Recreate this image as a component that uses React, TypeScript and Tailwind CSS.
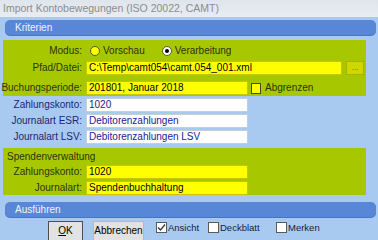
const FONT = "font-['Liberation_Sans',Arial,sans-serif]";

function Label({ text, tone }: { text: string; tone: "green" | "blue" }) {
  return (
    <div
      className={`w-[83px] shrink-0 pr-[4px] text-right whitespace-nowrap ${
        tone === "green" ? "text-[#2e3300]" : "text-[#22227a]"
      }`}
    >
      {text}
    </div>
  );
}

function Field({
  value,
  width,
  kind,
}: {
  value: string;
  width: string;
  kind: "yellow" | "white";
}) {
  return (
    <div
      className={`${width} h-[14px] flex items-center px-[2px] leading-none whitespace-nowrap overflow-hidden border ${
        kind === "yellow"
          ? "bg-[#ffff00] border-[#c9c300] text-black"
          : "bg-white border-[#c8cdd4] text-[#20209a]"
      }`}
    >
      {value}
    </div>
  );
}

function SectionBar({ title }: { title: string }) {
  return (
    <div className="ml-[5px] mr-[2px] h-[15px] rounded-[5px] bg-[#5787d6] flex items-center pl-[10px] text-[#eef3ff] shadow-[0_1px_0_#4a76c0]">
      {title}
    </div>
  );
}

function Check({ checked, label, width }: { checked?: boolean; label: string; width: string }) {
  return (
    <div className={`${width} flex items-center gap-[1px] text-[9.5px] text-[#1b1b3a]`}>
      <div className="w-[11px] h-[11px] bg-white border border-[#5a5a5a] flex items-center justify-center">
        {checked && (
          <svg width="9" height="9" viewBox="0 0 9 9">
            <path d="M1 4.5 L3.5 7 L8 1.5" fill="none" stroke="#333" strokeWidth="1.2" />
          </svg>
        )}
      </div>
      <span>{label}</span>
    </div>
  );
}

export default function App() {
  return (
    <div className={`${FONT} w-[378px] h-[240px] overflow-hidden bg-[#a8caf0] text-[10px] leading-none`}>
      <div className="h-[17px] bg-gradient-to-b from-[#dfe5ec] to-[#e9edf2] flex items-center pl-[3px] text-[10.5px] text-[#8a8c90]">
        Import Kontobewegungen (ISO 20022, CAMT)
      </div>

      <div className="mt-[3px]">
        <SectionBar title="Kriterien" />
      </div>

      <div className="mt-[5px] ml-[3px] w-[363px] h-[56px] bg-[#a7c800] flex flex-col pt-[4px]">
        <div className="h-[13px] flex items-center">
          <Label text="Modus:" tone="green" />
          <div className="flex items-center ml-[4px] text-[#2e3300]">
            <div className="w-[10px] h-[10px] rounded-full bg-[#ffff00] border border-[#5a5a2a]" />
            <span className="ml-[3px]">Vorschau</span>
            <div className="ml-[17px] w-[10px] h-[10px] rounded-full bg-white border border-[#5a5a2a] flex items-center justify-center">
              <div className="w-[4px] h-[4px] rounded-full bg-black" />
            </div>
            <span className="ml-[3px]">Verarbeitung</span>
          </div>
        </div>
        <div className="mt-[4px] h-[14px] flex items-center">
          <Label text="Pfad/Datei:" tone="green" />
          <Field value="C:\Temp\camt054\camt.054_001.xml" width="w-[256px]" kind="yellow" />
          <div className="ml-[4px] w-[18px] h-[14px] bg-[#cfd600] border border-[#aab200] flex items-center justify-center text-[8px] text-[#555]">
            ...
          </div>
        </div>
        <div className="mt-[6px] h-[14px] flex items-center -ml-[3px]">
          <div className="w-[86px] shrink-0 pr-[4px] text-right whitespace-nowrap text-[#2e3300]">Buchungsperiode:</div>
          <Field value="201801, Januar 2018" width="w-[162px]" kind="yellow" />
          <div className="ml-[3px] w-[10px] h-[11px] bg-[#ffff00] border border-[#4a4a1a]" />
          <span className="ml-[4px] text-[#2e3300]">Abgrenzen</span>
        </div>
      </div>

      <div className="ml-[3px] flex flex-col gap-[2px] pt-[2px]">
        {[
          ["Zahlungskonto:", "1020"],
          ["Journalart ESR:", "Debitorenzahlungen"],
          ["Journalart LSV:", "Debitorenzahlungen LSV"],
        ].map(([l, v]) => (
          <div key={l} className="h-[14px] flex items-center">
            <Label text={l} tone="blue" />
            <Field value={v} width="w-[162px]" kind="white" />
          </div>
        ))}
      </div>

      <div className="mt-[4px] ml-[3px] w-[363px] h-[47px] bg-[#a7c800] flex flex-col pt-[3px]">
        <div className="h-[12px] flex items-center pl-[4px] text-[#2e3300]">Spendenverwaltung</div>
        <div className="mt-[2px] h-[14px] flex items-center">
          <Label text="Zahlungskonto:" tone="green" />
          <Field value="1020" width="w-[162px]" kind="yellow" />
        </div>
        <div className="mt-[2px] h-[13px] flex items-center">
          <Label text="Journalart:" tone="green" />
          <Field value="Spendenbuchhaltung" width="w-[162px]" kind="yellow" />
        </div>
      </div>

      <div className="mt-[7px]">
        <SectionBar title="Ausführen" />
      </div>

      <div className="mt-[4px] flex items-start h-[20px]">
        <div className="ml-[48px] w-[35px] h-[20px] bg-[#e2e2e2] border border-[#4d4d4d] flex items-center justify-center text-black">
          <span><span className="underline">O</span>K</span>
        </div>
        <div className="ml-[10px] w-[51px] h-[20px] bg-[#e2e2e2] border border-[#b8b8b8] flex items-center justify-center text-black">
          Abbrechen
        </div>
        <div className="ml-[12px] mt-[1px] flex">
          <Check checked label="Ansicht" width="w-[52px]" />
          <Check label="Deckblatt" width="w-[68px]" />
          <Check label="Merken" width="w-[50px]" />
        </div>
      </div>
    </div>
  );
}
